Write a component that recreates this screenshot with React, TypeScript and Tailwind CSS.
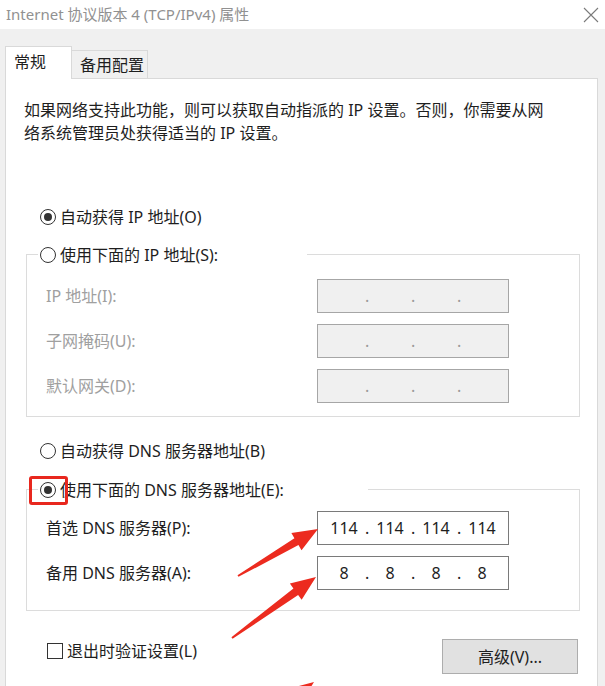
import { Fragment } from "react";

const font = "font-['Noto_Sans','Noto_Sans_CJK_SC',sans-serif]";

const Radio = ({ checked }: { checked?: boolean }) => (
  <span className="flex h-[16px] w-[16px] shrink-0 items-center justify-center rounded-full border border-[#333333] bg-white">
    {checked && <span className="h-[8px] w-[8px] rounded-full bg-[#333333]" />}
  </span>
);

const IpBox = ({ parts, disabled }: { parts: string[]; disabled?: boolean }) => (
  <div
    className={`flex h-[34px] w-[192px] items-center border px-[5px] ${
      disabled ? "border-[#a6a6a6] bg-[#f0f0f0] text-[#9a9a9a]" : "border-[#7a7a7a] bg-white text-[#1e1e1e]"
    }`}
  >
    {parts.map((p, i) => (
      <Fragment key={i}>
        {i > 0 && <span className="w-[4px] text-center">.</span>}
        <span className="w-[42px] text-center">{p}</span>
      </Fragment>
    ))}
  </div>
);

const Row = ({ label, parts, disabled }: { label: string; parts: string[]; disabled?: boolean }) => (
  <div className="flex items-center">
    <span className={`w-[271px] ${disabled ? "text-[#a0a0a0]" : ""}`}>{label}</span>
    <IpBox parts={parts} disabled={disabled} />
  </div>
);

// tapered arrow: thin tail, thick neck, triangular head
const arrowPoints = (tx: number, ty: number, px: number, py: number) => {
  const len = Math.hypot(px - tx, py - ty);
  const dx = (px - tx) / len;
  const dy = (py - ty) / len;
  const nx = -dy;
  const ny = dx;
  const hx = px - dx * 25;
  const hy = py - dy * 25;
  const pts = [
    [tx + nx * 1, ty + ny * 1],
    [hx + nx * 4, hy + ny * 4],
    [hx + nx * 10, hy + ny * 10],
    [px, py],
    [hx - nx * 10, hy - ny * 10],
    [hx - nx * 4, hy - ny * 4],
    [tx - nx * 1, ty - ny * 1],
  ];
  return pts.map((p) => p.join(",")).join(" ");
};

const empty = ["", "", "", ""];

export default function App() {
  return (
    <div className={`relative flex h-[686px] w-[605px] flex-col overflow-hidden bg-[#f0f0f0] text-[16px] text-[#1e1e1e] ${font}`}>
      {/* title bar */}
      <div className="flex h-[29px] shrink-0 items-center justify-between bg-white pl-[6px] pr-[6px]">
        <span className="text-[15px] text-[#919191]">Internet 协议版本 4 (TCP/IPv4) 属性</span>
        <svg width="16" height="16" viewBox="0 0 16 16">
          <path d="M1 1L15 15M15 1L1 15" stroke="#7a7a7a" strokeWidth="1.1" fill="none" />
        </svg>
      </div>

      {/* tabs */}
      <div className="flex shrink-0 items-end pl-[5px] pt-[17px]">
        <div className="relative z-10 -mb-px flex h-[33px] w-[67px] items-center border border-b-0 border-[#d9d9d9] bg-white pb-[2px] pl-[8px]">
          常规
        </div>
        <div className="flex h-[28px] w-[76px] items-center border border-b-0 border-l-0 border-[#d9d9d9] pl-[8px]">
          备用配置
        </div>
      </div>

      {/* panel */}
      <div className="ml-[5px] h-[640px] w-[593px] shrink-0 border border-[#d9d9d9] bg-white">
        <p className="ml-[18px] mt-[20px] leading-[23px]">
          如果网络支持此功能，则可以获取自动指派的 IP 设置。否则，你需要从网
          <br />
          络系统管理员处获得适当的 IP 设置。
        </p>

        <div className="ml-[34px] mt-[60px] flex h-[23px] items-center gap-[4px]">
          <Radio checked />
          <span>自动获得 IP 地址(O)</span>
        </div>

        <fieldset className="ml-[20px] mr-[17px] mt-[15px] border border-[#dcdcdc] pb-[13px]">
          <legend className="ml-[11px] flex h-[23px] w-[269px] items-center gap-[4px] pl-[2px]">
            <Radio />
            <span>使用下面的 IP 地址(S):</span>
          </legend>
          <div className="mt-[13px] flex flex-col gap-[11px] pl-[19px]">
            <Row label="IP 地址(I):" parts={empty} disabled />
            <Row label="子网掩码(U):" parts={empty} disabled />
            <Row label="默认网关(D):" parts={empty} disabled />
          </div>
        </fieldset>

        <div className="ml-[34px] mt-[22px] flex h-[23px] items-center gap-[4px]">
          <Radio />
          <span>自动获得 DNS 服务器地址(B)</span>
        </div>

        <fieldset className="ml-[20px] mr-[17px] mt-[16px] border border-[#dcdcdc] pb-[20px]">
          <legend className="ml-[11px] flex h-[23px] w-[330px] items-center gap-[4px] pl-[2px]">
            <Radio checked />
            <span>使用下面的 DNS 服务器地址(E):</span>
          </legend>
          <div className="mt-[10px] flex flex-col gap-[11px] pl-[19px]">
            <Row label="首选 DNS 服务器(P):" parts={["114", "114", "114", "114"]} />
            <Row label="备用 DNS 服务器(A):" parts={["8", "8", "8", "8"]} />
          </div>
        </fieldset>

        <div className="ml-[41px] mr-[19px] mt-[28px] flex items-start justify-between">
          <div className="flex h-[23px] items-center gap-[4px]">
            <span className="h-[16px] w-[16px] border border-[#333333] bg-white" />
            <span>退出时验证设置(L)</span>
          </div>
          <button className="h-[35px] w-[136px] border border-[#adadad] bg-[#e1e1e1]">高级(V)...</button>
        </div>
      </div>

      {/* annotation overlays */}
      <div className="pointer-events-none absolute left-[29px] top-[476px] h-[29px] w-[39px] rounded-[3px] border-[3px] border-[#e8271e]" />
      <svg className="pointer-events-none absolute left-0 top-0" width="605" height="686">
        <polygon points={arrowPoints(238, 576, 318, 529)} fill="#ec2b1f" />
        <polygon points={arrowPoints(232, 638, 316, 577)} fill="#ec2b1f" />
        <polygon points={arrowPoints(236, 740, 314, 682)} fill="#ec2b1f" />
      </svg>
    </div>
  );
}
